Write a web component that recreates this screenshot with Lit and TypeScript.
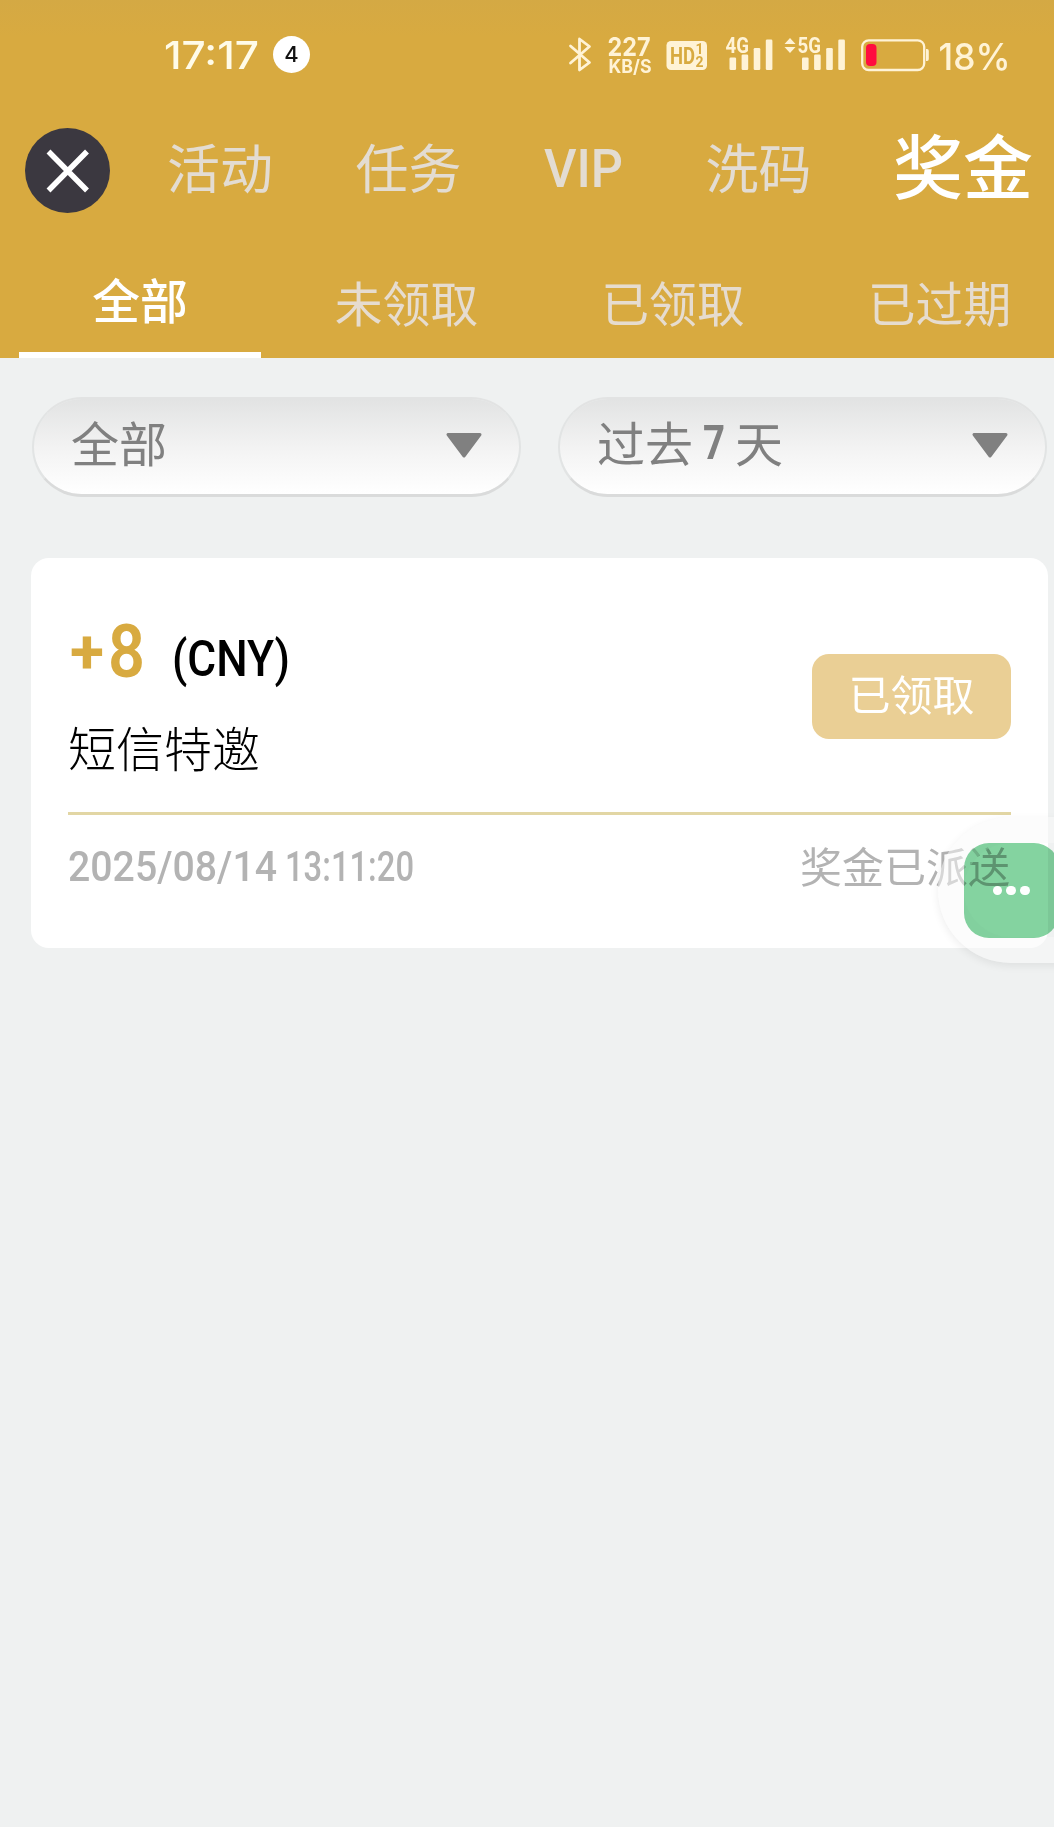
import { LitElement, html, svg, css } from "lit";
import { customElement, property } from "lit/decorators.js";

/** A single line of Latin text fitted to an exact width. */
@customElement("fit-text")
class FitText extends LitElement {
  @property() text = "";
  @property({ type: Number }) width = 10;
  @property({ type: Number }) height = 10;
  @property({ type: Number }) base = 10;
  @property({ type: Number }) size = 10;
  @property({ type: Number }) weight = 500;
  @property() family = "Roboto";

  static styles = css`
    :host {
      display: block;
      flex: none;
    }
    svg {
      display: block;
      overflow: visible;
    }
  `;

  render() {
    return html`<svg width=${this.width} height=${this.height}>
      ${svg`<text x="0" y=${this.base} fill="currentColor" font-family="${this.family}, 'Noto Sans CJK SC', sans-serif"
        font-size=${this.size} font-weight=${this.weight} textLength=${this.width}
        lengthAdjust="spacingAndGlyphs">${this.text}</text>`}
    </svg>`;
  }
}

@customElement("status-bar")
class StatusBar extends LitElement {
  static styles = css`
    :host {
      display: flex;
      height: 110px;
      padding-left: 164px;
      box-sizing: border-box;
      color: #fffbe8;
    }
    .time {
      margin-top: 35px;
    }
    .badge {
      flex: none;
      width: 37px;
      height: 37px;
      margin: 36px 0 0 14px;
      border-radius: 50%;
      background: #fff;
      color: #111;
      font: 500 22px/37px Inter, sans-serif;
      text-align: center;
    }
    .icons {
      display: block;
      flex: none;
      margin-left: 249px;
    }
  `;

  private bars(x: number) {
    const tops = [57.5, 54.5, 48, 39.5];
    return tops.map(
      (t, i) => svg`<rect x=${x + i * 12.1} y=${t} width="6.6" height=${70 - t} rx="1.3" fill="#fff3d6"/>`
    );
  }

  render() {
    return html`
      <fit-text class="time" text="17:17" width="95" height="40" base="34" size="38" weight="500" family="Inter"></fit-text>
      <span class="badge">4</span>
      <svg class="icons" width="494" height="110" viewBox="559 0 494 110" fill="#fff3d6">
        <path d="M570.5 46L589.500 62.500L579.500 70V39L589.500 46.500L570.500 63" fill="none" stroke="#fff3d6" stroke-width="2.800" stroke-linejoin="round" stroke-linecap="round" />
        <g font-family="Inter, sans-serif" font-weight="700">
          <text x="607.500" y="56.300" font-size="26" textLength="43" lengthAdjust="spacingAndGlyphs">227</text>
          <text x="608.500" y="73" font-size="18.500" textLength="43" lengthAdjust="spacingAndGlyphs">KB/S</text>
        </g>
        <rect x="666.500" y="41" width="40.500" height="29" rx="4.500" />
        <g font-family="Roboto, sans-serif" font-weight="700" fill="#d8aa40">
          <text x="670" y="63.500" font-size="23" textLength="25" lengthAdjust="spacingAndGlyphs">HD</text>
          <text x="695.500" y="54" font-size="14" textLength="8" lengthAdjust="spacingAndGlyphs">1</text>
          <text x="695.500" y="66.500" font-size="14" textLength="8" lengthAdjust="spacingAndGlyphs">2</text>
        </g>
        ${this.bars(729.500)}
        ${this.bars(802)}
        <g font-family="Roboto, sans-serif" font-weight="700" font-size="21.500" stroke="#d8aa40" stroke-width="1.500" paint-order="stroke">
          <text x="725.500" y="53" textLength="23.500" lengthAdjust="spacingAndGlyphs">4G</text>
          <text x="797.500" y="53" textLength="23.500" lengthAdjust="spacingAndGlyphs">5G</text>
        </g>
        <path d="M784.500 44L790 38L795.500 44zM784.500 47L790 53L795.500 47z" />
        <rect x="862.200" y="40.300" width="62" height="29.700" rx="6.500" fill="none" stroke="#fff3d6" stroke-width="2.300" />
        <path d="M926 49h1q1.800 0 1.800 2v8q0 2-1.800 2h-1z" />
        <rect x="866" y="44" width="10.500" height="22" rx="4" fill="#ff0d3f" />
        <text x="938.500" y="70.300" font-size="37" font-family="Inter, sans-serif" font-weight="500" textLength="72" lengthAdjust="spacingAndGlyphs">18%</text>
      </svg>
    `;
  }
}

@customElement("select-pill")
class SelectPill extends LitElement {
  static styles = css`
    :host {
      display: flex;
      justify-content: space-between;
      box-sizing: border-box;
      width: 489px;
      height: 100px;
      padding: 0 38px 0 37px;
      border: 2px solid #e2e4e4;
      border-top-color: #e2e3e3;
      border-bottom: 3px solid #dadbdb;
      border-radius: 50px;
      background: linear-gradient(#e2e3e3, #f3f3f3 52%, #fff) padding-box;
      color: #808080;
      font: 400 48px/85px "Noto Sans CJK SC", sans-serif;
    }
    .label {
      display: flex;
      white-space: pre;
    }
    svg {
      display: block;
      margin: 33px -2px 0 0;
    }
  `;

  render() {
    return html`
      <div class="label"><slot></slot></div>
      <svg width="38" height="28" viewBox="0 0 38 28">
        <path d="M3 2.500H35L19 24z" fill="#808080" stroke="#808080" stroke-width="3" stroke-linejoin="round" />
      </svg>
    `;
  }
}

@customElement("bonus-card")
class BonusCard extends LitElement {
  static styles = css`
    :host {
      display: block;
      box-sizing: border-box;
      width: 1017px;
      height: 390px;
      padding: 0 37px;
      border-radius: 18px;
      background: #fff;
      font-family: "Noto Sans CJK SC", sans-serif;
    }
    .main {
      display: flex;
      justify-content: space-between;
      height: 254px;
      border-bottom: 3px solid #e2d6a4;
    }
    .amount {
      display: flex;
      height: 157px;
      padding: 56px 0 0 2px;
      box-sizing: border-box;
      color: #000;
    }
    .value {
      color: #d8aa40;
    }
    .plus {
      margin-right: 4px;
    }
    .digit {
      margin-right: 27px;
    }
    .name {
      color: #000;
      font-size: 48px;
      font-weight: 300;
      line-height: 62px;
    }
    .state {
      width: 199px;
      height: 85px;
      margin-top: 96px;
      border-radius: 17px;
      background: #eacf95;
      color: #fff;
      font-size: 42px;
      line-height: 77px;
      text-align: center;
    }
    .foot {
      display: flex;
      justify-content: space-between;
      color: #b3b3b3;
      font-size: 42px;
      line-height: 60px;
      padding: 20px 1px 0 0;
    }
    .date {
      display: flex;
      gap: 8px;
    }
  `;

  render() {
    return html`
      <div class="main">
        <div>
          <div class="amount">
            <fit-text class="value plus" text="+" width="34" height="70" base="59" size="62" weight="700"></fit-text>
            <fit-text class="value digit" text="8" width="37" height="70" base="62.500" size="74" weight="600"></fit-text>
            <fit-text text="(CNY)" width="118" height="70" base="62" size="50" weight="500"></fit-text>
          </div>
          <div class="name">短信特邀</div>
        </div>
        <div class="state">已领取</div>
      </div>
      <div class="foot">
        <div class="date">
          <fit-text text="2025/08/14" width="209" height="60" base="46" size="43" weight="500"></fit-text>
          <fit-text text="13:11:20" width="129" height="60" base="46" size="43" weight="500"></fit-text>
        </div>
        <span>奖金已派送</span>
      </div>
    `;
  }
}

@customElement("app-root")
class AppRoot extends LitElement {
  static styles = css`
    :host {
      display: block;
      position: relative;
      width: 1054px;
      height: 1827px;
      overflow: hidden;
      background: #eff1f1;
      font-family: "Noto Sans CJK SC", sans-serif;
    }
    .head {
      height: 358px;
      background: linear-gradient(#d4a944, #d8aa40 36px);
    }
    .nav {
      display: flex;
      gap: 82.500px;
      height: 132px;
      padding-left: 25px;
      color: #e3dcd2;
      font-size: 53px;
      line-height: 113px;
      white-space: nowrap;
    }
    .close {
      display: block;
      flex: none;
      margin: 18px -25.500px 0 0;
    }
    .current {
      margin-left: -1px;
      color: #fff;
      font-size: 70px;
      font-weight: 500;
      line-height: 107px;
    }
    .tabs {
      display: flex;
      gap: 24.500px;
      height: 116px;
      padding-left: 19px;
    }
    .tab {
      flex: none;
      box-sizing: border-box;
      width: 242px;
      height: 116px;
      color: #e6dccf;
      font-size: 47.800px;
      line-height: 120px;
      text-align: center;
    }
    .tab.on {
      color: #fff;
      font-weight: 500;
      line-height: 114px;
      border-bottom: 6px solid #fff;
    }
    .filters {
      display: flex;
      gap: 37px;
      padding: 39px 0 61px 32px;
    }
    .seven {
      margin: 0 10px 0 10px;
    }
    bonus-card {
      margin-left: 31px;
    }
    .chat {
      position: absolute;
      left: 938px;
      top: 817px;
      display: grid;
      grid-template: 94px / 138px;
      border: 26px solid rgba(250, 250, 250, 0.5);
      border-radius: 73px;
      box-shadow: 0 3px 9px rgba(0, 0, 0, 0.07);
    }
    .bubble,
    .dots {
      grid-area: 1 / 1;
      width: 95px;
      height: 95px;
    }
    .bubble {
      border-radius: 25px;
      background: #84d3a0;
      mix-blend-mode: multiply;
    }
    .dots {
      z-index: 1;
      display: flex;
      align-items: center;
      gap: 4px;
      box-sizing: border-box;
      padding-left: 28.500px;
    }
    .dot {
      width: 9.700px;
      height: 9.700px;
      border-radius: 50%;
      background: #fff;
    }
  `;

  render() {
    return html`
      <header class="head">
        <status-bar></status-bar>
        <nav class="nav">
          <svg class="close" width="85" height="85" viewBox="0 0 85 85">
            <circle cx="42.500" cy="42.500" r="42.500" fill="#3b3840" />
            <path d="M23.500 23.500L62 62.500M62 23.500L23.500 62.500" stroke="#fff" stroke-width="5.500" />
          </svg>
          <span>活动</span>
          <span>任务</span>
          <fit-text text="VIP" width="79" height="110" base="77" size="53" weight="500"></fit-text>
          <span>洗码</span>
          <span class="current">奖金</span>
        </nav>
        <div class="tabs">
          <div class="tab on">全部</div>
          <div class="tab">未领取</div>
          <div class="tab">已领取</div>
          <div class="tab">已过期</div>
        </div>
      </header>
      <section class="filters">
        <select-pill>全部</select-pill>
        <select-pill>过去<fit-text class="seven" text="7" width="22" height="89" base="60" size="49" weight="700"></fit-text>天</select-pill>
      </section>
      <bonus-card></bonus-card>
      <div class="chat">
        <div class="bubble"></div>
        <div class="dots"><i class="dot"></i><i class="dot"></i><i class="dot"></i></div>
      </div>
    `;
  }
}
